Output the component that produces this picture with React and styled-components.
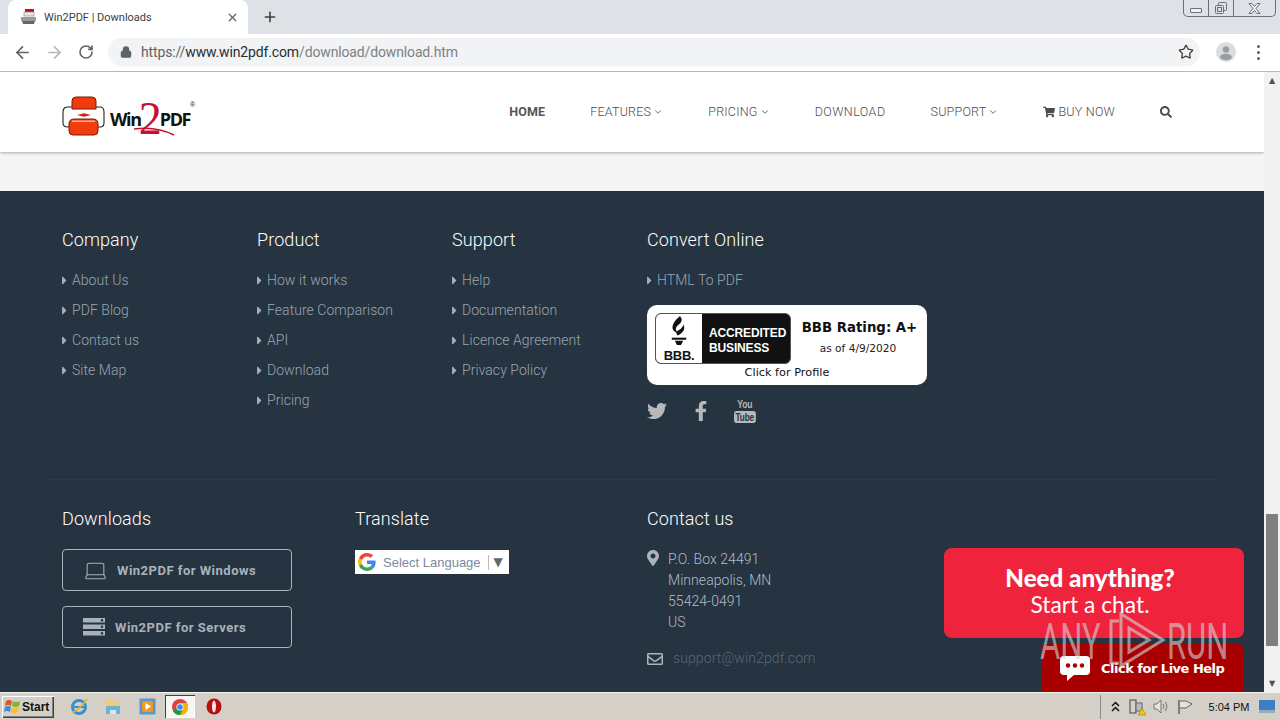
import React from "react";
import styled, { createGlobalStyle } from "styled-components";
import { ArrowLeft, ArrowRight, RotateCw, Lock, Star, X, Plus, Laptop, ChevronDown } from "lucide-react";
import { FaTwitter, FaFacebookF, FaShoppingCart, FaSearch, FaMapMarkerAlt, FaRegEnvelope, FaCaretRight } from "react-icons/fa";

const Global = createGlobalStyle`
  html, body { margin: 0; padding: 0; background: #263340; overflow: hidden; }
  * { box-sizing: border-box; }
  a { text-decoration: none; color: inherit; }
  ul { list-style: none; margin: 0; padding: 0; }
`;

const Screen = styled.div`
  position: relative; width: 1280px; height: 720px; overflow: hidden;
  display: flex; flex-direction: column; font-family: Roboto, sans-serif;
`;

/* ---- browser chrome ---- */
const TabStrip = styled.div`
  height: 34px; background: #dee1e6; display: flex; align-items: flex-start; flex: none;
`;
const Tab = styled.div`
  margin-left: 8px; width: 240px; height: 34px; background: #fff; border-radius: 8px 8px 0 0;
  display: flex; align-items: center; padding: 0 9px 0 12px; gap: 7px; color: #3c4043;
  font: 11px Roboto, sans-serif;
`;
const TabTitle = styled.span`flex: 1; white-space: nowrap;`;
const NewTab = styled.div`
  width: 28px; height: 34px; margin-left: 8px; display: flex; align-items: center; justify-content: center; color: #3c4043;
`;
const WindowControls = styled.div`
  margin-left: auto; margin-right: 4px; display: flex; height: 17px; border: 1px solid #66717d; border-top: 0;
  border-radius: 0 0 5px 5px;
`;
const WinBtn = styled.div`
  width: ${p => p.$w}px; display: flex; align-items: center; justify-content: center;
  border-left: ${p => p.$first ? "0" : "1px solid #66717d"};
`;
const MinGlyph = styled.span`width: 12px; height: 5px; border: 1px solid #66717d; border-radius: 1px; margin-top: 4px; background: #eef0f2;`;
const Toolbar = styled.div`
  height: 38px; background: #fff; border-bottom: 1px solid #b9b9b9; display: flex; align-items: center; flex: none; padding-bottom: 1px;
`;
const NavIcon = styled.div`
  width: 32px; height: 32px; display: flex; align-items: center; justify-content: center; color: ${p => p.$c || "#5f6368"};
`;
const NavIcons = styled.div`display: flex; margin-left: 6px; margin-right: 6px; align-items: center;`;
const Omnibox = styled.div`
  width: 1092px; height: 28px; background: #f1f3f4; border-radius: 14px; display: flex; align-items: center;
  font: 14px Roboto, sans-serif; color: #5f6368; padding-left: 12px;
`;
const Url = styled.span`margin-left: 9px; flex: 1; white-space: nowrap; letter-spacing: -.14px; color: #7d8185;`;
const UrlHost = styled.span`color: #2a2d30;`;
const UrlProto = styled.span`color: #5f6368;`;
const StarSlot = styled.div`
  width: 32px; height: 32px; margin-right: -2px; display: flex; align-items: center; justify-content: center; color: #444;
`;
const Avatar = styled.div`
  width: 20px; height: 20px; border-radius: 50%; background: #dadce0; margin-left: 16px; overflow: hidden; display: flex;
`;
const Dots = styled.div`
  margin-left: 21px; display: flex; flex-direction: column; gap: 3px;
`;
const Dot = styled.span`width: 3px; height: 3px; border-radius: 50%; background: #5f6368;`;

/* ---- page ---- */
const Viewport = styled.div`height: 620px; display: flex; flex: none;`;
const Page = styled.div`width: 1264px; height: 620px; overflow: hidden; display: flex; flex-direction: column;`;
const Scrollbar = styled.div`width: 16px; background: #f1f1f1; display: flex; flex-direction: column; align-items: center;`;
const ScrollArrow = styled.div`
  height: 17px; width: 16px; display: flex; align-items: center; justify-content: center; color: #505050; font-size: 8px;
  font-family: "DejaVu Sans", sans-serif;
`;
const Track = styled.div`flex: 1; width: 100%; padding: 425px 2px 29px 2px; display: flex;`;
const Thumb = styled.div`flex: 1; background: #7f7f7f;`;

const Header = styled.header`
  height: 80px; flex: none; background: #fff; display: flex; align-items: center; padding: 0 92px 0 62px;
  box-shadow: 0 1px 3px rgba(0,0,0,.3); position: relative; z-index: 1;
`;
const Logo = styled.div`display: flex; align-items: flex-start; width: 134px; height: 40px; position: relative; margin-top: 8px;`;
const LogoText = styled.span`
  font: 700 18px/18px "Open Sans", sans-serif; letter-spacing: -1.35px; color: #111; margin: 14px 0 0 4px; white-space: nowrap;
`;
const LogoTwo = styled.span`
  font: 400 46px/10px "Liberation Serif", serif; color: #c8102e; letter-spacing: 0; display: inline-block; margin: 0 -2px; vertical-align: -8px;
`;
const LogoTail = styled.svg`position: absolute; left: 72px; top: 30px;`;
const LogoMarkR = styled.span`position: absolute; left: 128px; top: 5px; font: 7px/8px "Liberation Sans", sans-serif; color: #222;`;
const Nav = styled.nav`margin-left: auto; display: flex; align-items: center; gap: 45px; margin-top: -1px;`;
const NavItem = styled.a`
  display: flex; align-items: center; gap: ${p => p.$gap ?? 2}px; font: ${p => p.$active ? 700 : 300} 12.5px Roboto, sans-serif; white-space: nowrap;
  color: ${p => p.$active ? "#555" : "#4c4c4c"}; letter-spacing: ${p => p.$ls ?? .22}px;
`;
const Spacer = styled.div`height: 39px; flex: none; background: #f5f5f5;`;

const Footer = styled.footer`background: #263340; flex: 1; color: #fff; font-weight: 300;`;
const TopRow = styled.div`
  display: grid; grid-template-columns: repeat(3, 195px) 1fr; padding: 37px 0 0 62px; height: 288px;
`;
const Divider = styled.div`height: 1px; margin: 0 46px; background: #2e3c4a;`;
const BottomRow = styled.div`
  display: grid; grid-template-columns: 293px 292px 1fr; padding: 27px 0 0 62px;
`;
const Heading = styled.h4`
  margin: 0; font: 300 18px/24px Roboto, sans-serif; color: #fff; letter-spacing: .1px;
`;
const LinkList = styled.ul`margin-top: 13px;`;
const LinkItem = styled.li`
  height: 30px; display: flex; align-items: center; gap: 1px; font: 300 14px Roboto, sans-serif; color: #98a6b4; white-space: nowrap; letter-spacing: .05px;
  svg { color: #a3b0bd; margin-left: -4px; flex: none; }
`;
const Bbb = styled.div`
  margin-top: 10px; width: 280px; height: 80px; background: #fff; border-radius: 10px; padding: 8px 0 0 8px; color: #111;
  display: grid; grid-template-columns: 136px 1fr; grid-template-rows: 51px 1fr; font-family: "DejaVu Sans", sans-serif;
`;
const BbbSeal = styled.div`
  border: 1px solid #555; border-radius: 6px; display: flex; overflow: hidden; background: #111; height: 51px;
`;
const BbbLogo = styled.div`
  width: 46px; background: #fff; display: flex; flex-direction: column; align-items: center; justify-content: flex-end;
  font: 700 13px/1 "Liberation Sans", sans-serif; color: #111; padding-bottom: 1px; letter-spacing: -.3px; white-space: nowrap;
`;
const BbbWords = styled.div`
  flex: 1; color: #fff; font: 700 12px/15px "Liberation Sans", sans-serif; padding: 12px 0 0 7px; letter-spacing: -.15px;
`;
const BbbRating = styled.div`padding: 7px 0 0 0; text-align: center; width: 136px;`;
const BbbStrong = styled.div`font: 700 13.3px/15px "DejaVu Sans", sans-serif; white-space: nowrap; margin-left: 1px;`;
const BbbSmall = styled.div`font: 10.6px/12px "DejaVu Sans", sans-serif; margin-top: 7px; color: #222; white-space: nowrap; margin-right: 2px;`;
const BbbProfile = styled.div`grid-column: 1 / span 2; text-align: center; font: 11.3px "DejaVu Sans", sans-serif; padding: 2px 8px 0 0;`;
const Social = styled.div`
  display: flex; align-items: center; margin-top: 14px; color: #b6b8ba; height: 24px;
`;
const SocialCell = styled.span`width: ${p => p.$w}px; display: flex; align-items: center;`;
const YouTube = styled.span`
  display: flex; flex-direction: column; align-items: center; font: 700 11px/11px "Liberation Sans", sans-serif; color: #b6b8ba; transform: scaleX(.78); gap: 1px; letter-spacing: -.2px;
`;
const Tube = styled.span`background: #b6b8ba; color: #263340; border-radius: 3px; padding: 0 2px; font-size: 10.5px; line-height: 12px;`;

const DlButton = styled.a`
  width: 230px; height: 42px; border: 1px solid #aab4bd; border-radius: 4px; display: flex; align-items: center; padding-left: ${p => p.$pad}px;
  gap: ${p => p.$gap}px; font: 700 13px Roboto, sans-serif; color: #a9b2ba; margin-top: ${p => p.$mt}px; white-space: nowrap;
  letter-spacing: .5px;
`;
const Translate = styled.div`
  margin-top: 19px; width: 154px; height: 24px; background: #fff; display: flex; align-items: center; padding-left: 3px;
  font: 13px "Liberation Sans", sans-serif; color: #7b8aa0; white-space: nowrap;
`;
const TranslateSep = styled.span`width: 1px; height: 15px; background: #bbb; margin: 0 5px 0 7px;`;
const TranslateArrow = styled.span`font-size: 12px; color: #666; font-family: "DejaVu Sans", sans-serif;`;
const ContactRow = styled.div`display: flex; gap: ${p => p.$gap}px; margin-top: ${p => p.$mt}px;`;
const IconCol = styled.div`width: 16px; color: #a9b4bf; display: flex; padding-top: ${p => p.$pt}px; margin-left: ${p => p.$ml || 0}px; flex: none;`;
const Address = styled.div`font: 300 14px/21px Roboto, sans-serif; color: #b3bcc5; letter-spacing: .05px;`;
const Email = styled.a`font: 300 14px/21px Roboto, sans-serif; color: #56677a; letter-spacing: .1px;`;

/* ---- overlays ---- */
const ChatCard = styled.div`
  position: absolute; left: 944px; top: 548px; width: 300px; height: 90px; background: #ef233c; border-radius: 8px; color: #fff; text-align: center;
  padding: 17px 8px 0 0;
`;
const ChatStrong = styled.div`font: 900 24.2px/26px Lato, sans-serif;`;
const ChatLight = styled.div`font: 400 22.8px/27px Lato, sans-serif;`;
const ChatBar = styled.div`
  position: absolute; left: 1041px; top: 644px; width: 203px; height: 48px; background: #a80000; border-radius: 6px 6px 0 0; color: #fff;
  display: flex; align-items: center; padding: 0 0 0 19px; gap: 11px; font: 700 13px "DejaVu Sans", sans-serif; letter-spacing: -.5px;
  white-space: nowrap;
`;
const Watermark = styled.div`
  position: absolute; left: 1040px; top: 612px; width: 192px; height: 56px; display: flex; align-items: center; color: rgba(215,215,215,.6);
  font: 400 50px/52px Roboto, sans-serif; pointer-events: none;
`;
const WatermarkWord = styled.span`display: inline-block; transform: scaleX(.62); transform-origin: left; width: ${p => p.$w}px; margin-top: 4px;`;

/* ---- taskbar ---- */
const Taskbar = styled.div`
  height: 28px; flex: none; background: #d4d0c8; border-top: 1px solid #f4f2ec; display: flex; align-items: center; position: relative;
`;
const Start = styled.div`
  margin-left: 2px; width: 52px; height: 22px; background: #d4d0c8; display: flex; align-items: center; gap: 0; padding-left: 2px;
  box-shadow: inset 1px 1px 0 #fff, inset -1px -1px 0 #404040, inset -2px -2px 0 #808080;
  font: 700 12px "Liberation Sans", sans-serif; color: #111;
`;
const QuickIcon = styled.div`
  width: ${p => p.$w || 33}px; height: 22px; display: flex; align-items: center; justify-content: center;
`;
const ActiveIcon = styled(QuickIcon)`
  background: #f6f5f2; box-shadow: inset 1px 1px 0 #404040, inset -1px -1px 0 #fff; width: 30px; height: 23px;
`;
const QuickBar = styled.div`display: flex; align-items: center; margin-left: 9px;`;
const Tray = styled.div`
  margin-left: auto; height: 24px; display: flex; align-items: center; border-left: 1px solid #8b8b8b; padding-left: 5px; margin-right: 4px;
`;
const TrayIcon = styled.div`width: ${p => p.$w}px; display: flex; justify-content: center; align-items: center;`;
const Clock = styled.span`font: 11px "Liberation Sans", sans-serif; color: #111; width: 58px; text-align: center; white-space: nowrap; margin-left: 2px;`;

const FOOT = [
  ["Company", ["About Us", "PDF Blog", "Contact us", "Site Map"]],
  ["Product", ["How it works", "Feature Comparison", "API", "Download", "Pricing"]],
  ["Support", ["Help", "Documentation", "Licence Agreement", "Privacy Policy"]],
];

const Links = ({ items }) => (
  <LinkList>
    {items.map(t => (
      <LinkItem key={t}><FaCaretRight size={13} />{t}</LinkItem>
    ))}
  </LinkList>
);

const Favicon = () => (
  <svg width="17" height="17" viewBox="0 0 17 17" style={{ flex: "none" }}>
    <rect x="5" y="0" width="9" height="3" fill="#c01020" />
    <rect x="4" y="3" width="10" height="4" fill="#e4e4e4" stroke="#888" strokeWidth=".6" />
    <path d="M1 8 h15 v4 H1z" fill="#9a9a9a" />
    <path d="M2 12 h13 l-1 3 H3z" fill="#666" />
  </svg>
);

const LogoMark = () => (
  <svg width="44" height="40" viewBox="0 0 44 40" style={{ flex: "none" }}>
    <path d="M6 11 H38 Q42 11 42 16 V27 Q42 31 38 31 H6 Q1 31 1 27 V16 Q1 11 6 11z" fill="#fff" stroke="#222" strokeWidth="1.1" />
    <path d="M10 5 q0-4 4-4 h16 q4 0 4 4 v8 H10z" fill="#f23c0c" stroke="#7a1c05" />
    <path d="M15 19 h14 l-7 1.800z M15 19 h14 l-7-1.800z" fill="#d8230a" />
    <path d="M7 28 q0-5 5-5 h19 q5 0 5 5 v7 q0 4-4 4 H11 q-4 0-4-4z" fill="#f23c0c" stroke="#7a1c05" />
    <rect x="10" y="24.500" width="23" height="1.400" fill="#fff" opacity=".65" />
  </svg>
);

const Torch = () => (
  <svg width="22" height="32" viewBox="0 0 20 31" style={{ marginBottom: 1, flex: "none" }}>
    <path d="M11 0 q4 5-2 9 q-5 4 1 8 q-8-2-6-8 q1-4 7-9z" fill="#111" />
    <path d="M14 8 q3 5-2 9 l-3 2 q-3-2 0-5 q5-2 5-6z" fill="#111" />
    <rect x="3" y="21" width="14" height="2" fill="#111" />
    <path d="M6 24 h8 l-2 4 h-4z" fill="#111" />
  </svg>
);

const GoogleG = () => (
  <svg width="18" height="18" viewBox="0 0 48 48" style={{ flex: "none", marginRight: 7 }}>
    <path fill="#EA4335" d="M24 9.500c3.500 0 6.700 1.200 9.200 3.600l6.900-6.900C35.900 2.400 30.500 0 24 0 14.600 0 6.500 5.400 2.600 13.200l8 6.200C12.400 13.700 17.700 9.500 24 9.500z" />
    <path fill="#4285F4" d="M47 24.500c0-1.600-.1-3.100-.4-4.500H24v9h12.900c-.6 3-2.200 5.500-4.700 7.200l7.700 6C44.400 37.900 47 31.800 47 24.500z" />
    <path fill="#FBBC05" d="M10.500 28.600c-.5-1.400-.8-3-.8-4.600s.3-3.200.8-4.600l-8-6.200C.9 16.500 0 20.100 0 24s.9 7.500 2.600 10.800l7.900-6.200z" />
    <path fill="#34A853" d="M24 48c6.500 0 11.900-2.100 15.900-5.800l-7.700-6c-2.100 1.400-4.900 2.300-8.200 2.300-6.300 0-11.600-4.200-13.500-9.900l-8 6.200C6.500 42.600 14.600 48 24 48z" />
  </svg>
);

const ServerIcon = () => (
  <svg width="23" height="18" viewBox="0 0 23 18" fill="#a9b2ba" style={{ flex: "none" }}>
    <rect x="0" y="0" width="22" height="4.500" />
    <rect x="0" y="6.500" width="22" height="4.500" />
    <rect x="0" y="13" width="22" height="4.500" />
    <circle cx="19" cy="2.200" r="1.200" fill="#263340" />
    <circle cx="19" cy="8.700" r="1.200" fill="#263340" />
    <circle cx="19" cy="15.200" r="1.200" fill="#263340" />
  </svg>
);

const PlayMark = () => (
  <svg width="64" height="56" viewBox="0 0 64 56" fill="none" stroke="rgba(215,215,215,.6)" strokeWidth="3" style={{ flex: "none", marginLeft: -3 }}>
    <path d="M16 9 H8 V51 H16" />
    <path d="M18 2 V54 L60 28z" />
    <path d="M26 16 V40 L46 28z" />
  </svg>
);

const ChatBubble = () => (
  <svg width="30" height="25" viewBox="0 0 30 25" style={{ flex: "none" }}>
    <path d="M4 0 H26 Q30 0 30 4 V15 Q30 19 26 19 H14 L7 25 V19 H4 Q0 19 0 15 V4 Q0 0 4 0z" fill="#fff" />
    <circle cx="8" cy="9.500" r="2.200" fill="#a80000" />
    <circle cx="15" cy="9.500" r="2.200" fill="#a80000" />
    <circle cx="22" cy="9.500" r="2.200" fill="#a80000" />
  </svg>
);

const RestoreGlyph = () => (
  <svg width="14" height="14" viewBox="0 0 14 14" fill="none" stroke="#66717d">
    <rect x="4.500" y="1.500" width="8" height="8" rx="1" />
    <rect x="1.500" y="4.500" width="8" height="8" rx="1" fill="#dee1e6" />
    <rect x="3.500" y="6.500" width="4" height="4" />
  </svg>
);
const CloseGlyph = () => (
  <svg width="13" height="11" viewBox="0 0 13 11" fill="#eef0f2" stroke="#66717d">
    <path d="M1 .5 H4 L6.500 3.500 L9 .5 H12 L8 5.500 L12 10.500 H9 L6.500 7.500 L4 10.500 H1 L5 5.500z" />
  </svg>
);

const WinFlag = () => (
  <svg width="18" height="17" viewBox="0 0 18 17" style={{ flex: "none" }}>
    <path d="M2 3 q3-2 6 0 l-1 5 q-3-2-6 0z" fill="#e8502a" />
    <path d="M9 3 q3 2 7 0 l-1 5 q-4 2-7 0z" fill="#7cb82f" />
    <path d="M1 9 q3-2 6 0 l-1 5 q-3-2-6 0z" fill="#3a8fd8" />
    <path d="M8 9 q3 2 7 0 l-1 5 q-4 2-7 0z" fill="#f7c02c" />
  </svg>
);
const IeIcon = () => (
  <svg width="19" height="19" viewBox="0 0 19 19">
    <circle cx="9" cy="10" r="6.500" fill="none" stroke="#3b8fd0" strokeWidth="3" />
    <rect x="4" y="9" width="11" height="2" fill="#3b8fd0" />
    <path d="M2 16 Q10 12 17 2" fill="none" stroke="#e9b52c" strokeWidth="1.500" />
  </svg>
);
const FolderIcon = () => (
  <svg width="18" height="18" viewBox="0 0 18 18">
    <path d="M2 2 h6 l2 2 h6 v5 H2z" fill="#e9cf7a" />
    <path d="M2 8 h14 v8 H12 v-4 H6 v4 H2z" fill="#6fb1d6" />
    <rect x="6" y="12" width="6" height="4" fill="#d9e8ef" />
  </svg>
);
const MediaIcon = () => (
  <svg width="17" height="17" viewBox="0 0 17 17">
    <rect x=".5" y=".5" width="16" height="16" fill="#5b98c8" />
    <rect x="3" y="3" width="11" height="11" rx="2" fill="#f09a22" />
    <path d="M6.500 5 L12 8.500 L6.500 12z" fill="#fff" />
  </svg>
);
const ChromeIcon = () => (
  <svg width="16" height="16" viewBox="0 0 16 16">
    <circle cx="8" cy="8" r="8" fill="#db4437" />
    <path d="M8 8 L1 12 A8 8 0 0 0 8 16 L12 8z" fill="#0f9d58" />
    <path d="M8 8 L12 8 L8 16 A8 8 0 0 0 15 4 H8z" fill="#f4b400" />
    <circle cx="8" cy="8" r="3.600" fill="#fff" />
    <circle cx="8" cy="8" r="2.800" fill="#4285f4" />
  </svg>
);
const OperaIcon = () => (
  <svg width="16" height="17" viewBox="0 0 16 17">
    <ellipse cx="8" cy="8.500" rx="7.500" ry="8" fill="#b80f0f" />
    <ellipse cx="8" cy="8.500" rx="2" ry="6" fill="#f4e6e0" />
  </svg>
);
const NetIcon = () => (
  <svg width="18" height="18" viewBox="0 0 18 18">
    <rect x="2" y="2" width="6" height="13" fill="none" stroke="#444" />
    <rect x="8" y="5" width="6" height="8" fill="#bbb" stroke="#666" />
    <path d="M10 17 L14 10 L18 17z" fill="#f2c521" stroke="#8a6d00" strokeWidth=".5" />
  </svg>
);
const SpeakerIcon = () => (
  <svg width="17" height="15" viewBox="0 0 17 15" fill="none" stroke="#77746c">
    <path d="M1 5 h3 l4-4 v13 l-4-4 H1z" fill="#e6e3dc" />
    <path d="M10 5 q2 2.500 0 5 M12.500 3 q3 4.500 0 9" />
  </svg>
);
const FlagIcon = () => (
  <svg width="16" height="16" viewBox="0 0 16 16" fill="none" stroke="#66635c">
    <path d="M2 1 V15" strokeWidth="1.500" />
    <path d="M3 2 H9 L15 5 L9 9 H3" fill="#e6e3dc" />
  </svg>
);
const DesktopIcon = () => (
  <svg width="16" height="14" viewBox="0 0 16 14">
    <rect width="16" height="10" fill="#3b7fc4" />
    <rect y="10" width="16" height="3" fill="#9ab" />
  </svg>
);
const AvatarGlyph = () => (
  <svg width="20" height="20" viewBox="0 0 20 20" fill="#9a9da1">
    <circle cx="10" cy="7.500" r="3.200" />
    <ellipse cx="10" cy="15" rx="6" ry="3.300" />
  </svg>
);

export default function App() {
  return (
    <Screen>
      <Global />
      <TabStrip>
        <Tab>
          <Favicon />
          <TabTitle>Win2PDF | Downloads</TabTitle>
          <X size={13} strokeWidth={2.4} color="#5f6368" />
        </Tab>
        <NewTab><Plus size={16} strokeWidth={2.4} /></NewTab>
        <WindowControls>
          <WinBtn $w={24} $first><MinGlyph /></WinBtn>
          <WinBtn $w={25}><RestoreGlyph /></WinBtn>
          <WinBtn $w={42}><CloseGlyph /></WinBtn>
        </WindowControls>
      </TabStrip>
      <Toolbar>
        <NavIcons>
          <NavIcon><ArrowLeft size={19} strokeWidth={2.2} /></NavIcon>
          <NavIcon $c="#b5b8bb"><ArrowRight size={19} strokeWidth={2.2} /></NavIcon>
          <NavIcon><RotateCw size={16} strokeWidth={2.4} /></NavIcon>
        </NavIcons>
        <Omnibox>
          <Lock size={12} strokeWidth={3} fill="#5f6368" />
          <Url><UrlProto>https://</UrlProto><UrlHost>www.win2pdf.com</UrlHost>/download/download.htm</Url>
          <StarSlot><Star size={16} strokeWidth={2} /></StarSlot>
        </Omnibox>
        <Avatar><AvatarGlyph /></Avatar>
        <Dots><Dot /><Dot /><Dot /></Dots>
      </Toolbar>
      <Viewport>
        <Page>
          <Header>
            <Logo>
              <LogoMark />
              <LogoText>Win<LogoTwo>2</LogoTwo>PDF</LogoText>
              <LogoTail width="44" height="10" viewBox="0 0 44 10" fill="none" stroke="#c8102e" strokeWidth="1.500"><path d="M0 3 Q22 0 40 9" /></LogoTail>
              <LogoMarkR>®</LogoMarkR>
            </Logo>
            <Nav>
              <NavItem $active $ls={.1}>HOME</NavItem>
              <NavItem>FEATURES <ChevronDown size={10} strokeWidth={2} /></NavItem>
              <NavItem>PRICING <ChevronDown size={10} strokeWidth={2} /></NavItem>
              <NavItem $ls={.45}>DOWNLOAD</NavItem>
              <NavItem>SUPPORT <ChevronDown size={10} strokeWidth={2} /></NavItem>
              <NavItem $gap={3}><FaShoppingCart size={12} />BUY NOW</NavItem>
              <NavItem><FaSearch size={12} /></NavItem>
            </Nav>
          </Header>
          <Spacer />
          <Footer>
            <TopRow>
              {FOOT.map(([h, items]) => (
                <div key={h}>
                  <Heading>{h}</Heading>
                  <Links items={items} />
                </div>
              ))}
              <div>
                <Heading>Convert Online</Heading>
                <Links items={["HTML To PDF"]} />
                <Bbb>
                  <BbbSeal>
                    <BbbLogo><Torch />BBB.</BbbLogo>
                    <BbbWords>ACCREDITED<br />BUSINESS</BbbWords>
                  </BbbSeal>
                  <BbbRating>
                    <BbbStrong>BBB Rating: A+</BbbStrong>
                    <BbbSmall>as of 4/9/2020</BbbSmall>
                  </BbbRating>
                  <BbbProfile>Click for Profile</BbbProfile>
                </Bbb>
                <Social>
                  <SocialCell $w={44}><FaTwitter size={20} /></SocialCell>
                  <SocialCell $w={40}><FaFacebookF size={20} /></SocialCell>
                  <SocialCell $w={24}><YouTube>You<Tube>Tube</Tube></YouTube></SocialCell>
                </Social>
              </div>
            </TopRow>
            <Divider />
            <BottomRow>
              <div>
                <Heading>Downloads</Heading>
                <DlButton $pad={20} $gap={9} $mt={18}><Laptop size={25} strokeWidth={1} />Win2PDF for Windows</DlButton>
                <DlButton $pad={20} $gap={9} $mt={15}><ServerIcon />Win2PDF for Servers</DlButton>
              </div>
              <div>
                <Heading>Translate</Heading>
                <Translate><GoogleG />Select Language<TranslateSep /><TranslateArrow>▼</TranslateArrow></Translate>
              </div>
              <div>
                <Heading>Contact us</Heading>
                <ContactRow $gap={7} $mt={18}>
                  <IconCol $pt={1} $ml={-2}><FaMapMarkerAlt size={16} /></IconCol>
                  <Address>P.O. Box 24491<br />Minneapolis, MN<br />55424-0491<br />US</Address>
                </ContactRow>
                <ContactRow $gap={10} $mt={15}>
                  <IconCol $pt={3}><FaRegEnvelope size={16} /></IconCol>
                  <Email>support@win2pdf.com</Email>
                </ContactRow>
              </div>
            </BottomRow>
          </Footer>
        </Page>
        <Scrollbar>
          <ScrollArrow>▲</ScrollArrow>
          <Track><Thumb /></Track>
          <ScrollArrow>▼</ScrollArrow>
        </Scrollbar>
      </Viewport>
      <Taskbar>
        <Start><WinFlag />Start</Start>
        <QuickBar>
          <QuickIcon $w={33}><IeIcon /></QuickIcon>
          <QuickIcon $w={34}><FolderIcon /></QuickIcon>
          <QuickIcon $w={35}><MediaIcon /></QuickIcon>
          <ActiveIcon><ChromeIcon /></ActiveIcon>
          <QuickIcon $w={38}><OperaIcon /></QuickIcon>
        </QuickBar>
        <Tray>
          <TrayIcon $w={18}><svg width="9" height="11" viewBox="0 0 9 11" fill="none" stroke="#111" strokeWidth="1.500"><path d="M1 5 L4.500 1.500 L8 5 M1 10 L4.500 6.500 L8 10" /></svg></TrayIcon>
          <TrayIcon $w={26}><NetIcon /></TrayIcon>
          <TrayIcon $w={22}><SpeakerIcon /></TrayIcon>
          <TrayIcon $w={26}><FlagIcon /></TrayIcon>
          <Clock>5:04 PM</Clock>
          <TrayIcon $w={18}><DesktopIcon /></TrayIcon>
        </Tray>
      </Taskbar>

      <ChatCard>
        <ChatStrong>Need anything?</ChatStrong>
        <ChatLight>Start a chat.</ChatLight>
      </ChatCard>
      <ChatBar><ChatBubble />Click for Live Help</ChatBar>
      <Watermark>
        <WatermarkWord $w={66}>ANY</WatermarkWord>
        <PlayMark />
        <WatermarkWord $w={62}>RUN</WatermarkWord>
      </Watermark>
    </Screen>
  );
}
